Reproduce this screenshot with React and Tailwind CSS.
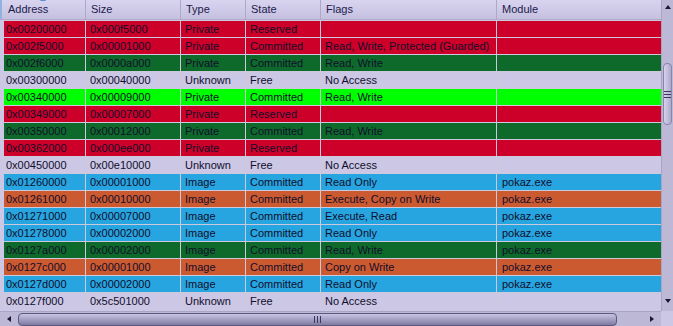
const C = {
  red: 'bg-[#cc0028]',
  dg: 'bg-[#0e6a2a]',
  lg: 'bg-[#00ff00]',
  lav: 'bg-[#cbc7e4]',
  blue: 'bg-[#27a5e0]',
  org: 'bg-[#cc5a30]',
};

const rows = [
  ['0x00200000', '0x000f5000', 'Private', 'Reserved', '', '', C.red],
  ['0x002f5000', '0x00001000', 'Private', 'Committed', 'Read, Write, Protected (Guarded)', '', C.red],
  ['0x002f6000', '0x0000a000', 'Private', 'Committed', 'Read, Write', '', C.dg],
  ['0x00300000', '0x00040000', 'Unknown', 'Free', 'No Access', '', C.lav],
  ['0x00340000', '0x00009000', 'Private', 'Committed', 'Read, Write', '', C.lg],
  ['0x00349000', '0x00007000', 'Private', 'Reserved', '', '', C.red],
  ['0x00350000', '0x00012000', 'Private', 'Committed', 'Read, Write', '', C.dg],
  ['0x00362000', '0x000ee000', 'Private', 'Reserved', '', '', C.red],
  ['0x00450000', '0x00e10000', 'Unknown', 'Free', 'No Access', '', C.lav],
  ['0x01260000', '0x00001000', 'Image', 'Committed', 'Read Only', 'pokaz.exe', C.blue],
  ['0x01261000', '0x00010000', 'Image', 'Committed', 'Execute, Copy on Write', 'pokaz.exe', C.org],
  ['0x01271000', '0x00007000', 'Image', 'Committed', 'Execute, Read', 'pokaz.exe', C.blue],
  ['0x01278000', '0x00002000', 'Image', 'Committed', 'Read Only', 'pokaz.exe', C.blue],
  ['0x0127a000', '0x00002000', 'Image', 'Committed', 'Read, Write', 'pokaz.exe', C.dg],
  ['0x0127c000', '0x00001000', 'Image', 'Committed', 'Copy on Write', 'pokaz.exe', C.org],
  ['0x0127d000', '0x00002000', 'Image', 'Committed', 'Read Only', 'pokaz.exe', C.blue],
  ['0x0127f000', '0x5c501000', 'Unknown', 'Free', 'No Access', '', C.lav],
];

const widths = ['w-[95px]', 'w-[65px]', 'w-[75px]', 'w-[176px]'];
const headers = ['Size', 'Type', 'State', 'Flags'];

function Grip({ vertical }) {
  return (
    <div className={`flex ${vertical ? 'flex-col gap-[2px]' : 'gap-[2px]'}`}>
      {[0, 1, 2].map((i) => (
        <div key={i} className={vertical ? 'w-[7px] h-px bg-[#3a3660]' : 'h-[7px] w-px bg-[#3a3660]'} />
      ))}
    </div>
  );
}

export default function App() {
  return (
    <div
      className="w-[673px] h-[326px] flex flex-col overflow-hidden bg-[#cbc7e4] text-[11px] text-[#120e2c]"
      style={{ fontFamily: '"Liberation Sans", Arial, sans-serif' }}
    >
      <div className="flex h-[311px]">
        <div className="w-[661px] flex flex-col">
          {/* header */}
          <div className="relative h-[20px] flex bg-gradient-to-b from-[#d8d4f0] to-[#c4c0de] border-b border-[#aeaacb] text-[#1c1a4c]">
            <div className="relative w-[86px] h-full flex items-center pl-[6px] border-r border-[#aca8c8] border-l-2 border-l-[#8fb2e0]">
              <span className="absolute left-[38px] top-[-3px] w-0 h-0 border-x-[3px] border-x-transparent border-b-[4px] border-b-[#5a8ad0]" />
              Address
            </div>
            {headers.map((h, i) => (
              <div key={h} className={`${widths[i]} h-full flex items-center pl-[5px] border-r border-[#aca8c8]`}>
                {h}
              </div>
            ))}
            <div className="flex-1 h-full flex items-center pl-[5px]">Module</div>
          </div>
          {/* rows */}
          <div className="flex flex-col pl-[4px]">
            {rows.map((r) => (
              <div key={r[0]} className={`flex h-[17px] border-t border-[#cdc9dd] ${r[6]}`}>
                <div className="w-[82px] h-full flex items-center pl-[2px] border-r border-[#cdc9dd]">{r[0]}</div>
                {[1, 2, 3, 4].map((j) => (
                  <div key={j} className={`${widths[j - 1]} h-full flex items-center pl-[4px] border-r border-[#cdc9dd] whitespace-nowrap`}>
                    {r[j]}
                  </div>
                ))}
                <div className="flex-1 h-full flex items-center pl-[5px]">{r[5]}</div>
              </div>
            ))}
          </div>
        </div>
        {/* vertical scrollbar */}
        <div className="w-[12px] h-full flex flex-col bg-[#bcb8d6] border-l border-[#a8a4c4]">
          <div className="h-[20px] flex items-start justify-center pt-[5px]">
            <span className="w-0 h-0 border-x-[3px] border-x-transparent border-b-[4px] border-b-[#1a1830]" />
          </div>
          <div className="h-[43px]" />
          <div className="h-[62px] mx-px flex items-center justify-center rounded-sm border border-[#8884aa] bg-gradient-to-r from-[#d6d2ec] to-[#aeaacb]">
            <Grip vertical />
          </div>
          <div className="flex-1" />
          <div className="h-[16px] flex items-start justify-center pt-[4px]">
            <span className="w-0 h-0 border-x-[3px] border-x-transparent border-t-[4px] border-t-[#1a1830]" />
          </div>
        </div>
      </div>
      {/* horizontal scrollbar */}
      <div className="flex h-[15px]">
        <div className="w-[661px] h-full flex items-center bg-[#bcb8d6] border-t border-[#a8a4c4]">
          <div className="w-[18px] h-full flex items-center justify-center">
            <span className="w-0 h-0 border-y-[3px] border-y-transparent border-r-[4px] border-r-[#1a1830]" />
          </div>
          <div className="w-[599px] h-[13px] flex items-center justify-center rounded-sm border border-[#5c5880] bg-gradient-to-b from-[#c8c4e2] via-[#a4a0c4] to-[#7e7aa2]">
            <Grip />
          </div>
          <div className="flex-1 h-full flex items-center justify-end pr-[7px]">
            <span className="w-0 h-0 border-y-[3px] border-y-transparent border-l-[4px] border-l-[#1a1830]" />
          </div>
        </div>
        <div className="flex-1 bg-[#cbc7e4]" />
      </div>
    </div>
  );
}
